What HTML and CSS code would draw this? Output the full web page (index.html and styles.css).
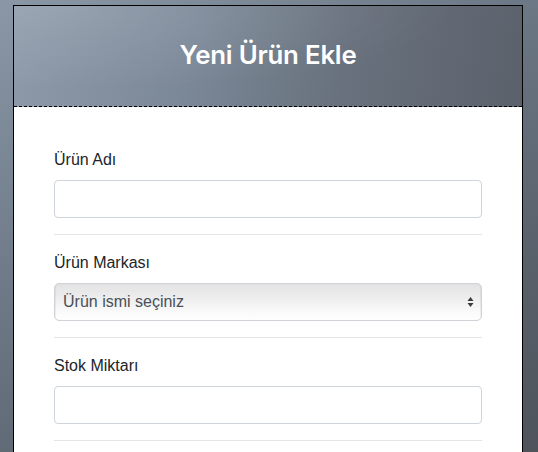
FILE: index.html
```html
<!DOCTYPE html>
<html lang="tr">
<head>
<meta charset="utf-8">
<title>Yeni Ürün Ekle</title>
<link rel="stylesheet" href="styles.css">
</head>
<body>
<div class="card">
  <div class="card-header">
    <h2 class="title">Yeni Ürün Ekle</h2>
  </div>
  <form class="card-body">
    <div class="field">
      <label class="label" for="ad">Ürün Adı</label>
      <input class="control" id="ad" type="text">
    </div>
    <hr class="sep">
    <div class="field">
      <label class="label" for="marka">Ürün Markası</label>
      <div class="select">
        <span class="select-text">Ürün ismi seçiniz</span>
        <svg class="select-arrows" width="7" height="10" viewBox="0 0 7 10"><path d="M3.5 0 L6.5 4 L0.5 4 Z M0.5 6 L6.5 6 L3.5 10 Z" fill="#3a3a3a"/></svg>
      </div>
    </div>
    <hr class="sep">
    <div class="field">
      <label class="label" for="stok">Stok Miktarı</label>
      <input class="control" id="stok" type="text">
    </div>
    <hr class="sep">
  </form>
</div>
</body>
</html>
```

FILE: styles.css
```css
html, body {
  margin: 0;
  height: 100%;
}
body {
  background: linear-gradient(150deg, #8a97a6 0%, #6c7885 40%, #58606a 75%, #4f545b 100%);
  font-family: "Liberation Sans", Arial, sans-serif;
  color: #212529;
  overflow: hidden;
}
.card {
  box-sizing: border-box;
  width: 510px;
  margin: 5px 0 0 13px;
  border: 1px solid #000;
  background: #fff;
}
.card-header {
  box-sizing: border-box;
  height: 101px;
  padding-bottom: 4px;
  border-bottom: 1px dashed #000;
  display: flex;
  align-items: center;
  justify-content: center;
  background:
    radial-gradient(ellipse at 10% 0%, rgba(255,255,255,0.12), rgba(255,255,255,0) 60%),
    linear-gradient(100deg, #8e9aaa 0%, #7b8898 35%, #68717d 65%, #5b616b 100%);
}
.title {
  margin: 0;
  color: #fff;
  font-family: "Inter", "Liberation Sans", sans-serif;
  font-size: 25.8px;
  font-weight: 600;
  letter-spacing: -0.2px;
}
.card-body {
  display: block;
  padding: 41px 40px 0;
}
.field {
  display: flex;
  flex-direction: column;
}
.label {
  font-size: 16px;
  line-height: 24px;
  margin-bottom: 8px;
}
.control {
  box-sizing: border-box;
  height: 38px;
  width: 100%;
  border: 1px solid #ced4da;
  border-radius: 4px;
  background: #fff;
  font: inherit;
  margin: 0;
}
.select {
  box-sizing: border-box;
  height: 38px;
  display: flex;
  align-items: center;
  justify-content: space-between;
  padding: 0 7px 0 8px;
  border: 1px solid #cfd3d8;
  border-radius: 5px;
  background: linear-gradient(#e3e3e3 0%, #ececec 35%, #f9f9f9 75%, #ffffff 100%);
  box-shadow: inset 1px 0 1px rgba(0,0,0,0.06), inset -1px 0 1px rgba(0,0,0,0.06);
}
.select-text {
  font-size: 16px;
  color: #495057;
}
.select-arrows {
  display: block;
}
.sep {
  margin: 16px 0;
  border: 0;
  border-top: 1px solid rgba(0,0,0,0.1);
}
```
